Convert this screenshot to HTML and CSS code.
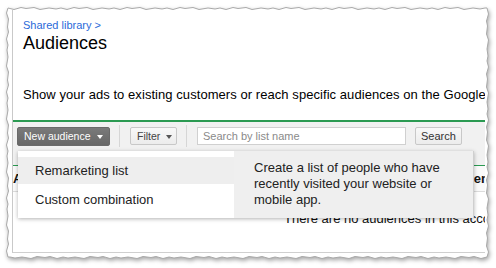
FILE: index.html
```html
<!DOCTYPE html>
<html>
<head>
<meta charset="utf-8">
<link rel="stylesheet" href="styles.css">
</head>
<body>
<div class="frame">
  <svg class="paper" width="496" height="268" viewBox="0 0 496 268">
    <path class="edge" d="M8,8
      l6,1.5 l7,-2 l5,1 l8,-1 l6,2 l9,-1.5 l7,1 l5,-1
      l6,1.5 l7,-2 l5,1 l8,-1 l6,2 l9,-1.5 l7,1 l5,-1
      l6,1.5 l7,-2 l5,1 l8,-1 l6,2 l9,-1.5 l7,1 l5,-1
      l6,1.5 l7,-2 l5,1 l8,-1 l6,2 l9,-1.5 l7,1 l5,-1
      l6,1.5 l7,-2 l5,1 l8,-1 l6,2 l9,-1.5 l7,1 l5,-1
      l6,1.5 l7,-2 l5,1 l8,-1 l6,2 l9,-1.5 l7,1 l5,-1
      l6,1.5 l7,-2 l5,1 l8,-1 l6,2 l9,-1.5 l7,1 l5,-1
      l6,1.5 l7,-2 l5,1 l8,-1 l6,2 l9,-1.5 l7,1 l5,-1
      l6,1.5 l7,-2 l5,1 l8,-1 l6,2 l9,-1.5 l7,1 l5,-1 l2,0
      l1.5,6 l-2,7 l1,5 l-1,8 l2,6 l-1.5,9 l1,7 l-1,5
      l1.5,6 l-2,7 l1,5 l-1,8 l2,6 l-1.5,9 l1,7 l-1,5
      l1.5,6 l-2,7 l1,5 l-1,8 l2,6 l-1.5,9 l1,7 l-1,5
      l1.5,6 l-2,7 l1,5 l-1,8 l2,6 l-1.5,9 l1,7 l-1,5
      l1.5,6 l-2,7 l1,5 l-1,8 l2,6 l-1.5,5
      l-6,1.5 l-7,-2 l-5,1 l-8,-1 l-6,2 l-9,-1.5 l-7,1 l-5,-1
      l-6,1.5 l-7,-2 l-5,1 l-8,-1 l-6,2 l-9,-1.5 l-7,1 l-5,-1
      l-6,1.5 l-7,-2 l-5,1 l-8,-1 l-6,2 l-9,-1.5 l-7,1 l-5,-1
      l-6,1.5 l-7,-2 l-5,1 l-8,-1 l-6,2 l-9,-1.5 l-7,1 l-5,-1
      l-6,1.5 l-7,-2 l-5,1 l-8,-1 l-6,2 l-9,-1.5 l-7,1 l-5,-1
      l-6,1.5 l-7,-2 l-5,1 l-8,-1 l-6,2 l-9,-1.5 l-7,1 l-5,-1
      l-6,1.5 l-7,-2 l-5,1 l-8,-1 l-6,2 l-9,-1.5 l-7,1 l-5,-1
      l-6,1.5 l-7,-2 l-5,1 l-8,-1 l-6,2 l-9,-1.5 l-7,1 l-5,-1
      l-6,1.5 l-7,-2 l-5,1 l-8,-1 l-6,2 l-9,-1.5 l-7,1 l-5,-1 l-2,0
      l-1.5,-6 l2,-7 l-1,-5 l1,-8 l-2,-6 l1.5,-9 l-1,-7 l1,-5
      l-1.5,-6 l2,-7 l-1,-5 l1,-8 l-2,-6 l1.5,-9 l-1,-7 l1,-5
      l-1.5,-6 l2,-7 l-1,-5 l1,-8 l-2,-6 l1.5,-9 l-1,-7 l1,-5
      l-1.5,-6 l2,-7 l-1,-5 l1,-8 l-2,-6 l1.5,-9 l-1,-7 l1,-5
      l-1.5,-6 l2,-7 l-1,-5 l1,-8 l-2,-6 l1.5,-5 Z"/>
  </svg>
  <div class="screen">
    <div class="head">
      <div class="crumb">Shared library &gt;</div>
      <h1 class="title">Audiences</h1>
      <p class="desc">Show your ads to existing customers or reach specific audiences on the Google Display Network.</p>
    </div>
    <div class="toolbar">
      <button class="btn-dark">New audience <span class="caret caret-light"></span></button>
      <span class="sep"></span>
      <button class="btn-light btn-filter">Filter <span class="caret"></span></button>
      <span class="sep"></span>
      <input class="search" type="text" placeholder="Search by list name">
      <button class="btn-light btn-search">Search</button>
    </div>
    <div class="thead">
      <div class="th th-name">Audience</div>
      <div class="th">Membership status</div>
    </div>
    <div class="empty">There are no audiences in this account.</div>

    <div class="menu">
      <ul class="menu-list">
        <li class="menu-item hover">Remarketing list</li>
        <li class="menu-item">Custom combination</li>
      </ul>
      <div class="menu-tip">Create a list of people who have recently visited your website or mobile app.</div>
    </div>
  </div>
</div>
</body>
</html>
```

FILE: styles.css
```css
* { box-sizing: border-box; }
html, body { margin: 0; padding: 0; background: #fff; }
body {
  width: 496px;
  height: 268px;
  overflow: hidden;
  font-family: "Liberation Sans", Arial, sans-serif;
  color: #222;
}
.frame {
  position: relative;
  width: 496px;
  height: 268px;
  padding: 10px 11px 15px 12px;
}
.paper {
  position: absolute;
  left: 0;
  top: 0;
  filter: drop-shadow(1px 2px 2px rgba(0,0,0,0.35));
}
.edge {
  fill: #fff;
  stroke: #a9a9a9;
  stroke-width: 1;
}
.screen {
  position: relative;
  width: 473px;
  height: 243px;
  overflow: hidden;
  background: #fff;
  border-left: 1px solid #c9c9c9;
  border-bottom: 1px solid #cfcfcf;
}
.head {
  padding: 9px 0 0 10px;
  height: 112px;
  border-bottom: 2px solid #2b9a52;
}
.crumb {
  font-size: 11px;
  line-height: 13px;
  color: #2a6ad9;
}
.title {
  margin: 0;
  font-size: 18px;
  line-height: 22px;
  font-weight: normal;
  color: #000;
}
.desc {
  margin: 33px 0 0;
  font-size: 13px;
  line-height: 16px;
  letter-spacing: 0.06px;
  color: #000;
  white-space: nowrap;
}
.toolbar {
  display: flex;
  align-items: center;
  height: 44px;
  padding: 0 0 15px 4px;
  background: #f1f1f1;
  border-bottom: 1px solid #2b9a52;
}
button, input { font-family: "Liberation Sans", Arial, sans-serif; margin: 0; }
.btn-dark {
  display: flex;
  align-items: center;
  width: 93px;
  height: 19px;
  padding: 0 0 0 6px;
  font-size: 10.5px;
  color: #fff;
  background: linear-gradient(#7a7a7a, #676767);
  border: 1px solid #6a6a6a;
  border-radius: 2px;
}
.btn-light {
  display: flex;
  align-items: center;
  height: 18px;
  padding: 0 0 0 6px;
  font-size: 10.5px;
  color: #444;
  background: linear-gradient(#f8f8f8, #ececec);
  border: 1px solid #c8c8c8;
  border-radius: 2px;
}
.btn-filter { width: 47px; }
.caret {
  display: inline-block;
  width: 0;
  height: 0;
  margin-left: 6px;
  margin-top: 2px;
  border-left: 3.5px solid transparent;
  border-right: 3.5px solid transparent;
  border-top: 4px solid #555;
}
.caret-light { border-top-color: #fff; }
.sep {
  width: 1px;
  height: 22px;
  background: #d6d6d6;
  margin: 0 10px 0 9px;
}
.search {
  width: 209px;
  height: 18px;
  padding: 0 5px;
  font-size: 11px;
  border: 1px solid #d0d0d0;
  background: #fff;
  outline: none;
}
.search::placeholder { color: #8a8a8a; }
.btn-search {
  margin-left: 9px;
  width: 47px;
  font-size: 11px;
  padding: 0 0 0 5px;
  color: #333;
}
.thead {
  display: flex;
  height: 26px;
  align-items: center;
  background: #fafafa;
  border-bottom: 1px solid #dcdcdc;
  font-size: 13px;
  font-weight: bold;
  color: #111;
  white-space: nowrap;
}
.th-name { flex: 0 0 450px; }
.empty {
  padding: 19px 0 0 271px;
  font-size: 13px;
  line-height: 16px;
  color: #111;
  white-space: nowrap;
}
.menu {
  position: absolute;
  left: 5px;
  top: 141px;
  display: flex;
  height: 67px;
  box-shadow: 0 1px 4px rgba(0,0,0,0.3);
}
.menu-list {
  list-style: none;
  margin: 0;
  padding: 6px 0 0;
  width: 216px;
  background: #fff;
}
.menu-item {
  height: 27px;
  line-height: 27px;
  padding-left: 17px;
  font-size: 13px;
  color: #222;
}
.menu-item.hover { background: #eeeeee; margin-bottom: 2px; }
.menu-tip {
  width: 240px;
  padding: 9px 20px 0 20px;
  background: #efefef;
  border-right: 1px solid #cfcfcf;
  font-size: 13px;
  line-height: 16px;
  color: #222;
}
```
